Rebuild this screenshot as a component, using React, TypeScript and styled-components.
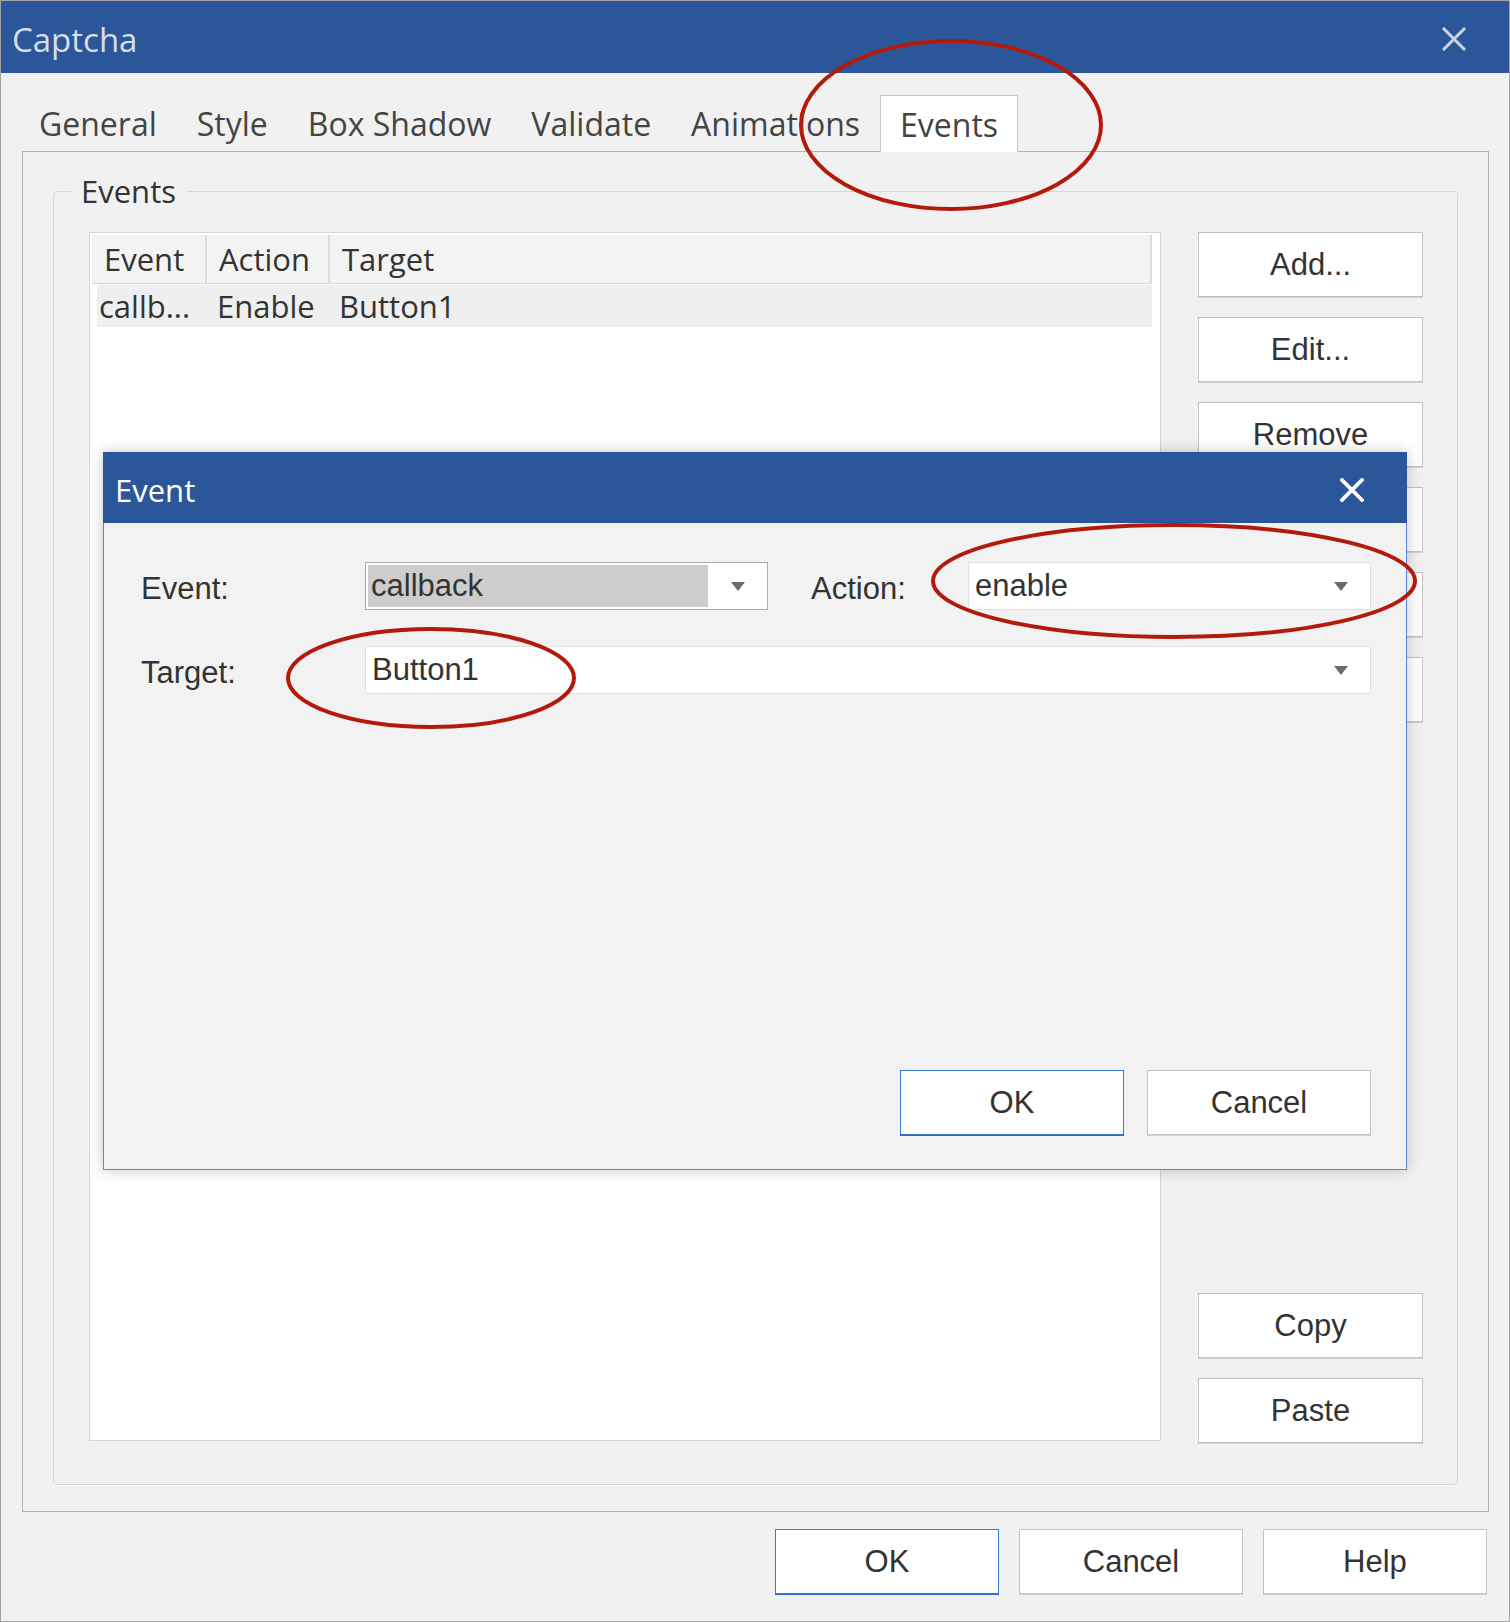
import React from 'react';
import styled, { createGlobalStyle } from 'styled-components';

const UI_FONT = `"Open Sans", "Noto Sans", sans-serif`;
const ARIAL = `"Liberation Sans", Arial, sans-serif`;
const TITLE_BLUE = '#2b579a';
const FACE = '#f1f1f1';

const GlobalStyle = createGlobalStyle`
  html, body {
    margin: 0;
    padding: 0;
    background: ${FACE};
  }
  body {
    font-family: ${UI_FONT};
  }
  * {
    box-sizing: border-box;
  }
`;

const Window = styled.div`
  position: relative;
  width: 1510px;
  height: 1622px;
  border: 1px solid #a3a3a3;
  background: ${FACE};
  display: flex;
  flex-direction: column;
  overflow: hidden;
`;

const TitleBar = styled.div`
  height: 72px;
  flex: none;
  background: ${TITLE_BLUE};
  display: flex;
  align-items: center;
  justify-content: space-between;
  padding: 4px 43px 0 11px;
`;

const WindowTitle = styled.span`
  font-family: ${UI_FONT};
  font-size: 33px;
  line-height: 1;
  color: #d7dee8;
`;

const CloseIcon = styled.svg<{ $bold?: boolean }>`
  width: 24px;
  height: 24px;
  flex: none;
  stroke: ${(p) => (p.$bold ? '#ffffff' : '#ccd4df')};
  stroke-width: ${(p) => (p.$bold ? 3.8 : 3)};
  stroke-linecap: square;
  fill: none;
`;

const Content = styled.div`
  flex: 1;
  display: flex;
  flex-direction: column;
  padding: 0 20px 27px 21px;
  min-height: 0;
`;

const TabRow = styled.div`
  height: 78px;
  flex: none;
  display: flex;
  align-items: flex-end;
  margin-left: -3px;
`;

const Tab = styled.div<{ $active?: boolean }>`
  height: ${(p) => (p.$active ? 57 : 56)}px;
  display: flex;
  align-items: center;
  padding: 0 ${(p) => (p.$active ? 19 : 20)}px;
  font-family: ${UI_FONT};
  font-size: 32px;
  color: #444;
  white-space: nowrap;
  position: relative;
  z-index: 1;
  background: ${(p) => (p.$active ? '#ffffff' : 'transparent')};
  border: ${(p) => (p.$active ? '1px solid #c8c8c8' : 'none')};
  border-bottom: none;
  margin-bottom: ${(p) => (p.$active ? -1 : 0)}px;
`;

const TabPanel = styled.div`
  flex: 1;
  display: flex;
  flex-direction: column;
  border: 1px solid #b5b5b5;
  background: ${FACE};
  padding: 21px 30px 26px 30px;
  min-height: 0;
`;

const GroupBox = styled.fieldset`
  flex: 1;
  margin: 0;
  min-width: 0;
  border: 1px solid #d7d7d7;
  border-radius: 4px;
  box-shadow: 0 1px 0 #fbfbfb;
  padding: 23px 34px 43px 35px;
  display: flex;
  flex-direction: column;
`;

const GroupLegend = styled.legend`
  font-family: ${UI_FONT};
  font-size: 31px;
  line-height: 36px;
  color: #333;
  padding: 0 11px 0 10px;
  margin-left: -18px;
`;

const GroupInner = styled.div`
  flex: 1;
  display: flex;
  gap: 37px;
  min-height: 0;
`;

const ListView = styled.div`
  flex: 1;
  background: #ffffff;
  border: 1px solid #d6d6d6;
  padding: 2px;
  display: flex;
  flex-direction: column;
`;

const HeaderRow = styled.div`
  height: 49px;
  display: flex;
  margin-right: 6px;
  background: #f3f3f3;
  border-bottom: 1px solid #d9d9d9;
`;

const HeaderCell = styled.div<{ $width?: number }>`
  ${(p) => (p.$width ? `width: ${p.$width}px; flex: none;` : 'flex: 1;')}
  display: flex;
  align-items: center;
  padding-left: 12px;
  border-right: 2px solid #dcdcdc;
  font-family: ${UI_FONT};
  font-size: 31px;
  color: #333;
  white-space: nowrap;
`;

const ListRow = styled.div`
  height: 42px;
  display: flex;
  margin: 1px 6px 0 5px;
  background: #efefef;
`;

const ListCell = styled.div<{ $width?: number; $pad: number }>`
  ${(p) => (p.$width ? `width: ${p.$width}px; flex: none;` : 'flex: 1;')}
  display: flex;
  align-items: center;
  padding-left: ${(p) => p.$pad}px;
  font-family: ${UI_FONT};
  font-size: 31px;
  color: #333;
  white-space: nowrap;
  overflow: hidden;
`;

const ButtonColumn = styled.div`
  width: 225px;
  flex: none;
  display: flex;
  flex-direction: column;
  gap: 20px;
`;

const BottomGroup = styled.div`
  margin-top: auto;
  display: flex;
  flex-direction: column;
  gap: 20px;
  margin-bottom: -2px;
`;

const PushButton = styled.div<{ $default?: boolean; $width?: number }>`
  width: ${(p) => p.$width ?? 225}px;
  height: 65px;
  flex: none;
  display: flex;
  align-items: center;
  justify-content: center;
  background: #ffffff;
  border: 1px solid ${(p) => (p.$default ? '#3f78d6' : '#c3c3c3')};
  box-shadow: ${(p) => (p.$default ? '0 1px 0 #2f66c4' : '0 1px 0 #d2d2d2')};
  font-family: ${ARIAL};
  font-size: 31px;
  color: #333;
`;

const BottomBar = styled.div`
  flex: none;
  display: flex;
  justify-content: flex-end;
  gap: 20px;
  margin-top: 17px;
  padding-right: 2px;
`;

/* the "Event" sub dialog lying over the main window */
const Modal = styled.div`
  position: absolute;
  left: 102px;
  top: 451px;
  width: 1304px;
  height: 718px;
  display: flex;
  flex-direction: column;
  box-shadow: 0 0 14px rgba(0, 0, 0, 0.22);
  z-index: 5;
`;

const ModalTitleBar = styled.div`
  height: 71px;
  flex: none;
  background: ${TITLE_BLUE};
  display: flex;
  align-items: center;
  justify-content: space-between;
  padding: 5px 43px 0 12px;
`;

const ModalTitle = styled.span`
  font-family: ${UI_FONT};
  font-size: 31px;
  line-height: 1;
  color: #ffffff;
`;

const ModalBody = styled.div`
  flex: 1;
  display: flex;
  flex-direction: column;
  gap: 36px;
  background: #f2f2f2;
  border: 1px solid #5a88d4;
  border-top: none;
  padding: 39px 35px 34px 37px;
`;

const FormRow = styled.div`
  height: 48px;
  display: flex;
  align-items: center;
`;

const FieldLabel = styled.div<{ $width: number; $gap?: number }>`
  width: ${(p) => p.$width}px;
  flex: none;
  margin-left: ${(p) => p.$gap ?? 0}px;
  padding-top: 6px;
  font-family: ${ARIAL};
  font-size: 31px;
  color: #333;
`;

const ComboBox = styled.div<{ $width?: number; $strong?: boolean }>`
  ${(p) => (p.$width ? `width: ${p.$width}px; flex: none;` : 'flex: 1;')}
  height: 48px;
  display: flex;
  align-items: stretch;
  background: #ffffff;
  border: 1px solid ${(p) => (p.$strong ? '#ababab' : '#e1e1e1')};
`;

const ComboValue = styled.div<{ $selected?: boolean }>`
  flex: 1;
  display: flex;
  align-items: center;
  margin: 2px 0 2px 2px;
  padding-left: ${(p) => (p.$selected ? 3 : 4)}px;
  background: ${(p) => (p.$selected ? '#cdcdcd' : 'transparent')};
  font-family: ${ARIAL};
  font-size: 31px;
  color: #333;
`;

const ComboArrow = styled.div`
  width: 59px;
  flex: none;
  display: flex;
  align-items: center;
  justify-content: center;

  &::after {
    content: '';
    border-left: 7px solid transparent;
    border-right: 7px solid transparent;
    border-top: 9px solid #6b6b6b;
  }
`;

const ModalFooter = styled.div`
  margin-top: auto;
  display: flex;
  justify-content: flex-end;
  gap: 23px;
`;

/* hand drawn red rings of the screenshot annotation */
const Annotations = styled.svg`
  position: absolute;
  left: -1px;
  top: -1px;
  width: 1510px;
  height: 1622px;
  pointer-events: none;
  z-index: 10;

  ellipse {
    fill: none;
    stroke: #b41a0c;
    stroke-width: 4;
  }
`;

const tabs = ['General', 'Style', 'Box Shadow', 'Validate', 'Animations', 'Events'];
const activeTab = 'Events';

const columns = [
  { title: 'Event', width: 115 },
  { title: 'Action', width: 123 },
  { title: 'Target' },
];

const rows = [{ event: 'callb...', action: 'Enable', target: 'Button1' }];

const sideButtons = ['Add...', 'Edit...', 'Remove', '', '', ''];

const Close: React.FC<{ bold?: boolean }> = ({ bold }) => (
  <CloseIcon viewBox="0 0 24 24" $bold={bold}>
    <path d="M2 2 L22 22 M22 2 L2 22" />
  </CloseIcon>
);

const App: React.FC = () => {
  return (
    <>
      <GlobalStyle />
      <Window>
        <TitleBar>
          <WindowTitle>Captcha</WindowTitle>
          <Close />
        </TitleBar>

        <Content>
          <TabRow>
            {tabs.map((t) => (
              <Tab key={t} $active={t === activeTab}>
                {t}
              </Tab>
            ))}
          </TabRow>

          <TabPanel>
            <GroupBox>
              <GroupLegend>Events</GroupLegend>
              <GroupInner>
                <ListView>
                  <HeaderRow>
                    {columns.map((c) => (
                      <HeaderCell key={c.title} $width={c.width}>
                        {c.title}
                      </HeaderCell>
                    ))}
                  </HeaderRow>
                  {rows.map((r, i) => (
                    <ListRow key={i}>
                      <ListCell $width={110} $pad={2}>{r.event}</ListCell>
                      <ListCell $width={123} $pad={10}>{r.action}</ListCell>
                      <ListCell $pad={9}>{r.target}</ListCell>
                    </ListRow>
                  ))}
                </ListView>

                <ButtonColumn>
                  {sideButtons.map((b, i) => (
                    <PushButton key={i}>{b}</PushButton>
                  ))}
                  <BottomGroup>
                    <PushButton>Copy</PushButton>
                    <PushButton>Paste</PushButton>
                  </BottomGroup>
                </ButtonColumn>
              </GroupInner>
            </GroupBox>
          </TabPanel>

          <BottomBar>
            <PushButton $default $width={224}>OK</PushButton>
            <PushButton $width={224}>Cancel</PushButton>
            <PushButton $width={224}>Help</PushButton>
          </BottomBar>
        </Content>

        <Modal>
          <ModalTitleBar>
            <ModalTitle>Event</ModalTitle>
            <Close bold />
          </ModalTitleBar>
          <ModalBody>
            <FormRow>
              <FieldLabel $width={224}>Event:</FieldLabel>
              <ComboBox $width={403} $strong>
                <ComboValue $selected>callback</ComboValue>
                <ComboArrow />
              </ComboBox>
              <FieldLabel $width={157} $gap={43}>Action:</FieldLabel>
              <ComboBox>
                <ComboValue>enable</ComboValue>
                <ComboArrow />
              </ComboBox>
            </FormRow>
            <FormRow>
              <FieldLabel $width={224}>Target:</FieldLabel>
              <ComboBox>
                <ComboValue>Button1</ComboValue>
                <ComboArrow />
              </ComboBox>
            </FormRow>
            <ModalFooter>
              <PushButton $default $width={224}>OK</PushButton>
              <PushButton $width={224}>Cancel</PushButton>
            </ModalFooter>
          </ModalBody>
        </Modal>

        <Annotations viewBox="0 0 1510 1622">
          <ellipse cx={951} cy={125} rx={150} ry={84} />
          <ellipse cx={1174} cy={581} rx={241} ry={56} />
          <ellipse cx={431} cy={678} rx={143} ry={49} />
        </Annotations>
      </Window>
    </>
  );
};

export default App;
